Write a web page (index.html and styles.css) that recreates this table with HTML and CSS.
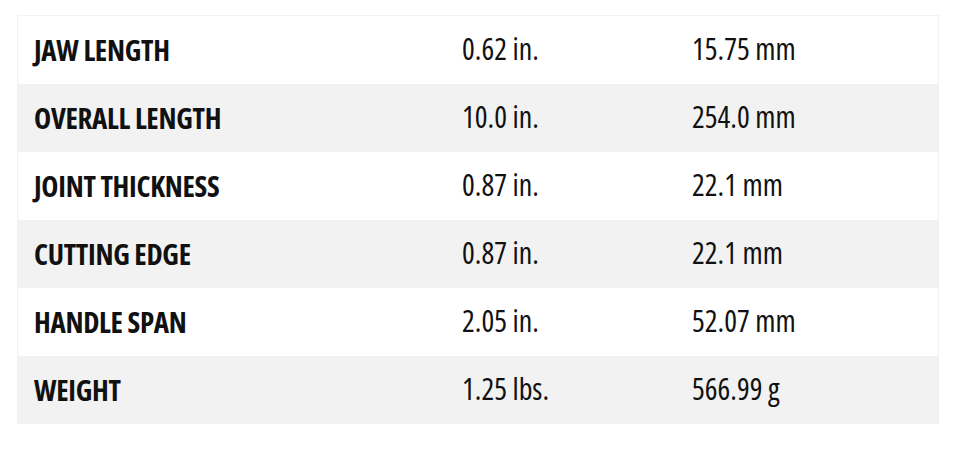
FILE: index.html
```html
<!DOCTYPE html>
<html lang="en">
<head>
<meta charset="utf-8">
<title>Specifications</title>
<link rel="stylesheet" href="styles.css">
</head>
<body>
<div class="specs">
  <div class="row"><div class="label">JAW LENGTH</div><div class="val">0.62 in.</div><div class="val">15.75 mm</div></div>
  <div class="row"><div class="label">OVERALL LENGTH</div><div class="val">10.0 in.</div><div class="val">254.0 mm</div></div>
  <div class="row"><div class="label">JOINT THICKNESS</div><div class="val">0.87 in.</div><div class="val">22.1 mm</div></div>
  <div class="row"><div class="label">CUTTING EDGE</div><div class="val">0.87 in.</div><div class="val">22.1 mm</div></div>
  <div class="row"><div class="label">HANDLE SPAN</div><div class="val">2.05 in.</div><div class="val">52.07 mm</div></div>
  <div class="row"><div class="label">WEIGHT</div><div class="val">1.25 lbs.</div><div class="val">566.99 g</div></div>
</div>
</body>
</html>
```
FILE: styles.css
```css
html, body {
  margin: 0;
  background: #ffffff;
}
body {
  padding: 15px 0 0 17px;
  font-family: "Open Sans", "Roboto", sans-serif;
  font-stretch: 75%;
  color: #111111;
}
.specs {
  width: 920px;
  border: 1px solid #f2f2f2;
  border-bottom: none;
}
.row {
  display: grid;
  grid-template-columns: 428px 230px 1fr;
  height: 68px;
  align-items: center;
}
.row:nth-child(even) {
  background: #f2f2f2;
}
.label, .val {
  padding: 0 0 2px 16px;
  line-height: 1;
  white-space: nowrap;
}
.label {
  font-size: 29px;
  font-weight: 700;
  letter-spacing: -0.3px;
}
.val {
  font-size: 30px;
  font-weight: 400;
  letter-spacing: 0;
}
```
